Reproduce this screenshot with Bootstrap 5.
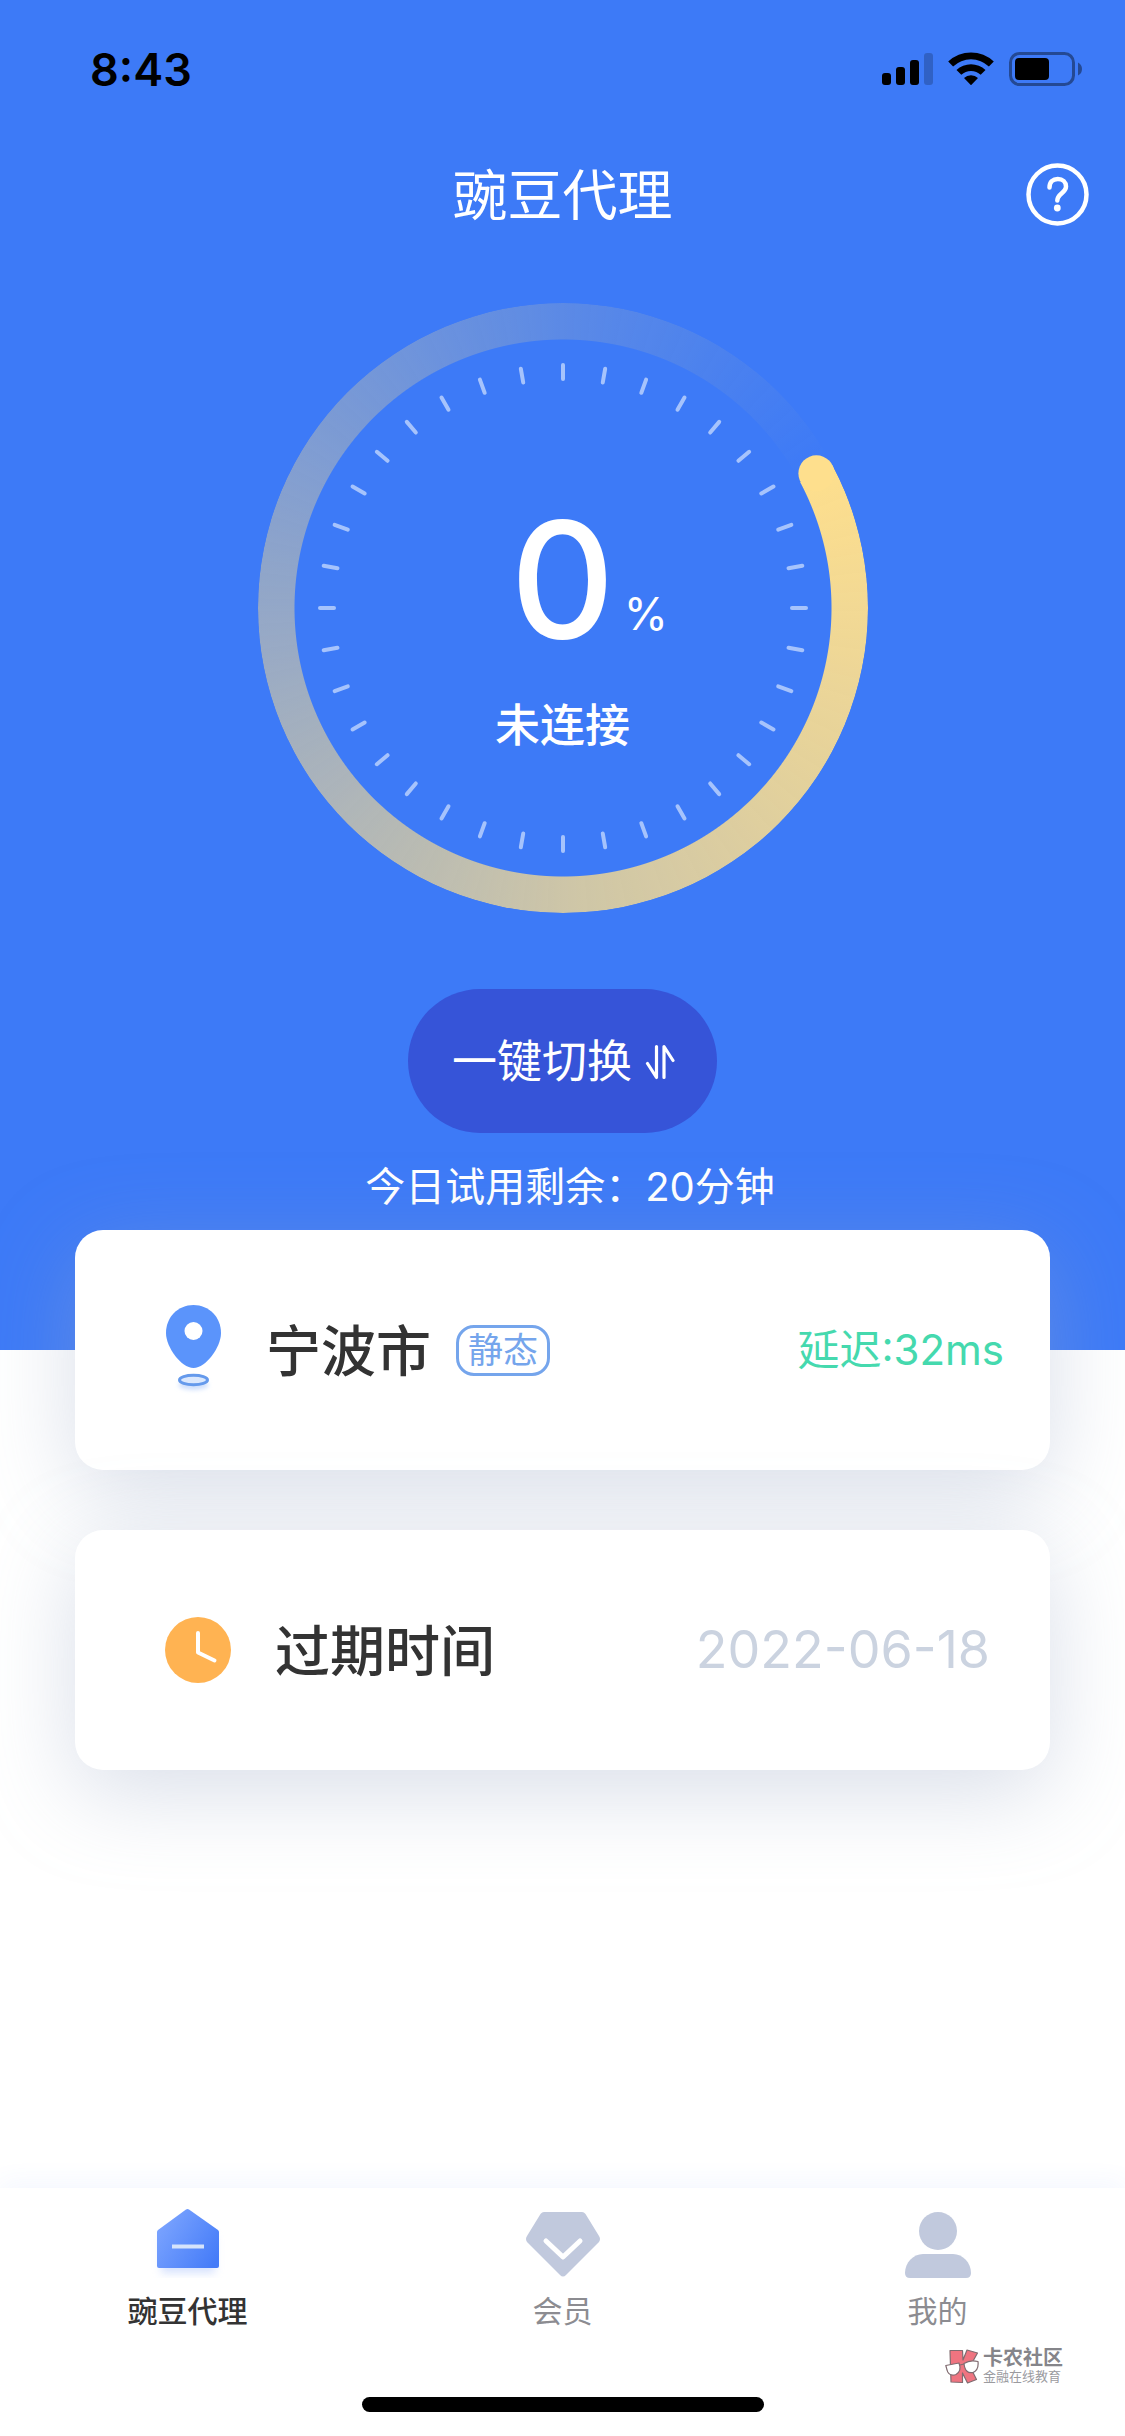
<!DOCTYPE html>
<html lang="zh-CN">
<head>
<meta charset="utf-8">
<meta name="viewport" content="width=device-width, initial-scale=1">
<title>豌豆代理</title>
<link href="https://cdn.jsdelivr.net/npm/bootstrap@5.3.0/dist/css/bootstrap.min.css" rel="stylesheet">
<style>
  body { font-family: Inter, "Noto Sans CJK SC", sans-serif; color: #333; background: #fff; line-height: 1; }
  svg { display: block; flex: none; }
  .hero { background: #3d7af7; padding-bottom: 138px; }
  .status-bar { height: 138px; padding: 0 42px 0 90px; }
  .clock-text { font-size: 45px; font-weight: 600; color: #000; }
  .title-bar { height: 112px; padding: 0 36px; display: grid; grid-template-columns: 1fr auto 1fr; }
  .title-bar h1 { font-size: 55px; line-height: 64px; font-weight: 400; padding-top: 2px; }
  .gauge { width: 610px; height: 610px; margin: 53px auto 76px; }
  .gauge-ring { border-radius: 50%;
    background: conic-gradient(from 62deg, #fedf8d, rgba(254, 223, 141, .75) 118deg, rgba(254, 223, 141, .45) 208deg, rgba(254, 223, 141, .16) 298deg, rgba(254, 223, 141, 0));
    -webkit-mask: radial-gradient(closest-side, transparent 268px, #000 269px); mask: radial-gradient(closest-side, transparent 268px, #000 269px); }
  .gauge-value { display: grid; grid-template-columns: 1fr auto 1fr; width: 100%; align-items: end; padding-top: 38px; }
  .gauge-number { grid-column: 2; font-size: 162px; line-height: 162px; font-weight: 500; }
  .gauge-unit { font-size: 45px; line-height: 45px; padding: 0 0 24px 9px; }
  .gauge-state { font-size: 45px; line-height: 60px; font-weight: 500; margin-top: 36px; }
  .btn-switch { --bs-btn-bg: #3654d8; --bs-btn-hover-bg: #304cc8; --bs-btn-active-bg: #2c46b8; --bs-btn-color: #fff; --bs-btn-hover-color: #fff; --bs-btn-active-color: #fff;
    height: 144px; padding: 2px 42px 0 44px; border: 0; font-size: 45px; line-height: 60px; gap: 13px; }
  .trial { font-size: 40px; line-height: 50px; margin: 29px 0 0; padding-left: 15px; }
  .panels { margin-top: -120px; padding: 0 75px; gap: 60px; }
  .panel { --bs-card-border-width: 0; --bs-card-border-radius: 28px; --bs-card-bg: #fff; height: 240px;
    box-shadow: 0 22px 90px rgba(155, 168, 196, .38); padding: 0 46px 0 90px; }
  .panel-date { padding-right: 60px; }
  .panel-name { font-size: 55px; line-height: 66px; font-weight: 500; color: #333; margin-left: 44px; padding-top: 2px; }
  .tag { border: 3px solid #75a5ec; border-radius: 18px; color: #75a5ec; font-size: 35px; line-height: 45px; padding: 0 9px; margin-left: 25px; }
  .delay { font-size: 42px; line-height: 60px; color: #45d9ae; }
  .expiry { font-size: 52px; line-height: 60px; color: #cbd3e0; }
  .tabs { background: #fff; box-shadow: 0 -6px 24px rgba(61, 122, 247, .06); padding-top: 18px; }
  .tab-link { font-size: 30px; line-height: 42px; color: #8c8c91; gap: 12px; }
  .tab-link.active { color: #333; font-weight: 500; }
  .credit { padding-right: 62px; height: 40px; gap: 4px; margin-top: 14px; color: #85858a; }
  .credit-name { font-size: 20px; line-height: 21px; font-weight: 700; }
  .credit-line { font-size: 13px; line-height: 15px; color: #9b9b9f; }
  .home-bar { width: 402px; height: 15px; border-radius: 8px; background: #000; margin: 11px auto 24px; }
</style>
</head>
<body class="d-flex flex-column min-vh-100">
<header class="hero text-white text-center">
  <div class="status-bar d-flex align-items-center justify-content-between">
    <span class="clock-text">8:43</span>
    <svg width="201" height="36" viewBox="882 51 201 36" role="img" aria-label="信号、无线网络与电量">
      <rect x="882" y="73" width="9" height="12" rx="3"/><rect x="896" y="67" width="9" height="18" rx="3"/><rect x="910" y="60" width="9" height="25" rx="3"/><rect x="924" y="53" width="9" height="32" rx="3" opacity=".2"/>
      <path d="M948.200 61.600A33 33 0 0 1 993.800 61.600L988.900 66.500A26 26 0 0 0 953.100 66.500ZM956.500 70A21 21 0 0 1 985.500 70L980.700 74.800A14 14 0 0 0 961.300 74.800ZM964 78.100A10 10 0 0 1 978 78.100L971 85.200Z"/>
      <rect x="1010.500" y="53.500" width="63" height="31" rx="9" fill="none" stroke="#000" stroke-width="3" opacity=".4"/>
      <rect x="1015" y="58" width="34" height="22" rx="4"/>
      <path d="M1078 62.500Q1082 64.500 1082 69T1078 75.500Z" opacity=".4"/>
    </svg>
  </div>
  <div class="title-bar align-items-center">
    <span></span>
    <h1 class="m-0">豌豆代理</h1>
    <a href="#help" class="ms-auto text-white" aria-label="帮助">
      <svg width="63" height="63" viewBox="0 0 63 63" fill="none" stroke="#fff" stroke-width="4.500" stroke-linecap="round"><circle cx="31.500" cy="31.500" r="29"/><path d="M23.500 24.500C23.500 19 27 16 31.800 16C36.700 16 40 19.300 40 23.500C40 30 31.300 30.500 31.300 37.500"/><circle cx="31.300" cy="45" r="3.400" fill="#fff" stroke="none"/></svg>
    </a>
  </div>
  <div class="gauge position-relative d-flex flex-column align-items-center justify-content-center">
    <div class="gauge-ring position-absolute top-0 start-0 w-100 h-100"></div>
    <svg class="position-absolute top-0 start-0 w-100 h-100" viewBox="0 0 610 610" aria-hidden="true">
      <circle cx="558.400" cy="170.300" r="18" fill="#fedf8d"/>
      <g id="ticks" stroke="#a6c3fc" stroke-width="4" stroke-linecap="round"></g>
    </svg>
    <div class="gauge-value">
      <span class="gauge-number">0</span><span class="gauge-unit text-start">%</span>
    </div>
    <div class="gauge-state">未连接</div>
  </div>
  <button type="button" class="btn btn-switch rounded-pill d-inline-flex align-items-center">一键切换
    <svg width="30" height="36" viewBox="0 0 30 36" fill="none" stroke="#fff" stroke-width="3.200" stroke-linecap="round" stroke-linejoin="round"><path d="M2.500 19.500L11.500 33.500V2.500M19 33.500V2.500L28 16.500"/></svg>
  </button>
  <p class="trial">今日试用剩余：20分钟</p>
</header>

<main class="panels d-flex flex-column flex-grow-1">
  <section class="panel card flex-row align-items-center">
    <svg width="57" height="96" viewBox="0 0 57 96" aria-hidden="true">
      <defs><filter id="soft" x="-30%" y="-50%" width="160%" height="200%"><feGaussianBlur stdDeviation="2"/></filter></defs>
      <path d="M28.500 3C44 3 56 15 56 31C56 45 41 66 28.500 66S1 45 1 31C1 15 13 3 28.500 3Z" fill="#5b94fb"/>
      <circle cx="28.500" cy="29" r="9" fill="#fff"/>
      <ellipse cx="28.500" cy="83" rx="15" ry="5" fill="#cfdffc" filter="url(#soft)"/>
      <ellipse cx="28.500" cy="78" rx="14" ry="4.800" fill="#dbe8fd" stroke="#659aec" stroke-width="3"/>
    </svg>
    <span class="panel-name">宁波市</span>
    <span class="tag">静态</span>
    <span class="delay ms-auto">延迟:32ms</span>
  </section>
  <section class="panel panel-date card flex-row align-items-center">
    <svg width="66" height="66" viewBox="0 0 66 66" aria-hidden="true"><circle cx="33" cy="33" r="33" fill="#ffb352"/><path d="M33 16V35.500L49.500 43.500" fill="none" stroke="#fff" stroke-width="4" stroke-linecap="round" stroke-linejoin="round"/></svg>
    <span class="panel-name">过期时间</span>
    <time class="expiry ms-auto" datetime="2022-06-18">2022-06-18</time>
  </section>
</main>

<footer class="tabs">
  <nav class="row g-0">
    <a class="tab-link active col d-flex flex-column align-items-center text-decoration-none" href="#proxy" aria-current="page">
      <svg width="78" height="72" viewBox="0 0 78 72"><defs><linearGradient id="hg" x1="0" y1=".2" x2="1" y2=".8"><stop stop-color="#7da5ff"/><stop offset="1" stop-color="#457cf8"/></linearGradient><filter id="hs" x="-30%" y="-30%" width="160%" height="160%"><feGaussianBlur stdDeviation="4"/></filter></defs>
        <path d="M12 30H66V67H12Z" fill="#adc5fc" opacity=".5" filter="url(#hs)"/>
        <path d="M37 3.500Q38.500 2.500 40 3.500L69 24Q70 25 70 26V60Q70 62 68 62H10Q8 62 8 60V26Q8 25 9 24Z" fill="url(#hg)"/><path d="M23 40.500H55" stroke="#d5e3fb" stroke-width="4"/></svg>
      豌豆代理</a>
    <a class="tab-link col d-flex flex-column align-items-center text-decoration-none" href="#vip">
      <svg width="78" height="72" viewBox="0 0 78 72"><path d="M20 6H58Q60 6 61.500 8L75 30Q77 33 75 36L42 69Q39 72 36 69L3 36Q1 33 3 30L16.500 8Q18 6 20 6Z" fill="#c1c9dd"/><path d="M22 35L39 51L56 35" fill="none" stroke="#fff" stroke-width="5" stroke-linecap="round" stroke-linejoin="round"/></svg>
      会员</a>
    <a class="tab-link col d-flex flex-column align-items-center text-decoration-none" href="#me">
      <svg width="78" height="72" viewBox="0 0 78 72" fill="#c1c9dd"><circle cx="39" cy="25" r="19"/><path d="M24 48H54C64 48 72 57 72 67Q72 72 67 72H11Q6 72 6 67C6 57 14 48 24 48Z"/></svg>
      我的</a>
  </nav>
  <div class="credit d-flex align-items-center justify-content-end">
    <svg width="34" height="35" viewBox="0 0 34 35" stroke="#806b70" stroke-width="1.200" stroke-linejoin="round" aria-hidden="true"><path d="M5 1.500L17.500 1.500L18 11L22 1L32.500 4L25 17.500L31.500 30.500L22.500 34L17.500 24V33.500L6 33Z" fill="#ef7480"/><path d="M.8 16.500L14 14Q17 22 11 25.500Q3 28 1.500 19Z" fill="#fff"/><path d="M19 14.500Q25 10.500 33 12.500Q34 21 28 23.500Q20 25 19 14.500Z" fill="#fff"/><path d="M15 16L19 15" fill="none"/></svg>
    <div class="d-flex flex-column"><span class="credit-name">卡农社区</span><span class="credit-line">金融在线教育</span></div>
  </div>
  <div class="home-bar"></div>
</footer>
<script src="https://cdn.jsdelivr.net/npm/bootstrap@5.3.0/dist/js/bootstrap.bundle.min.js"></script>
<script>
  // 36 scale marks, one every ten degrees
  const ticks = document.getElementById('ticks');
  for (let angle = 0; angle < 360; angle += 10) {
    const line = document.createElementNS('http://www.w3.org/2000/svg', 'line');
    line.setAttribute('x1', 305); line.setAttribute('x2', 305);
    line.setAttribute('y1', 62); line.setAttribute('y2', 76);
    line.setAttribute('transform', `rotate(${angle} 305 305)`);
    ticks.appendChild(line);
  }
</script>
</body>
</html>
